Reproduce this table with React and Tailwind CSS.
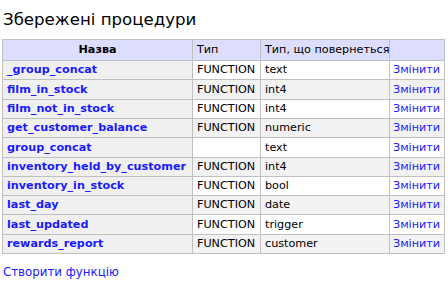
import React from "react";

const rows = [
  ["_group_concat", "FUNCTION", "text"],
  ["film_in_stock", "FUNCTION", "int4"],
  ["film_not_in_stock", "FUNCTION", "int4"],
  ["get_customer_balance", "FUNCTION", "numeric"],
  ["group_concat", "", "text"],
  ["inventory_held_by_customer", "FUNCTION", "int4"],
  ["inventory_in_stock", "FUNCTION", "bool"],
  ["last_day", "FUNCTION", "date"],
  ["last_updated", "FUNCTION", "trigger"],
  ["rewards_report", "FUNCTION", "customer"],
];

export default function App() {
  return (
    <div
      className="w-[448px] h-[284px] bg-white text-black text-[11.2px] overflow-hidden"
      style={{ fontFamily: '"DejaVu Sans", Verdana, sans-serif' }}
    >
      <div className="pt-[9px] pl-[3px] text-[16.6px] leading-[21px] font-normal">
        Збережені процедури
      </div>
      <table className="ml-[2px] mt-[9px] border-collapse border border-[#c0c0c0] table-fixed w-[442px]">
        <colgroup>
          <col className="w-[190px]" />
          <col className="w-[68px]" />
          <col className="w-[129px]" />
          <col className="w-[55px]" />
        </colgroup>
        <thead>
          <tr className="bg-[#ddddff]">
            <th className="border border-[#c0c0c0] px-[3.4px] py-[3.3px] leading-[13.5px] text-center font-bold">
              Назва
            </th>
            <td className="border border-[#c0c0c0] px-[4px] py-[3.3px] leading-[13.5px]">Тип</td>
            <td className="border border-[#c0c0c0] px-[4px] py-[3.3px] leading-[13.5px] whitespace-nowrap">
              Тип, що повернеться
            </td>
            <td className="border border-[#c0c0c0] px-[4px] py-[3.3px] leading-[13.5px]"></td>
          </tr>
        </thead>
        <tbody>
          {rows.map((r, i) => {
            const bg = i % 2 === 1 ? "bg-[#f2f2f2]" : "bg-white";
            return (
              <tr key={r[0]}>
                <th className="border border-[#c0c0c0] bg-[#f0f0f0] px-[4px] py-[2.4px] leading-[13.5px] text-left font-bold whitespace-nowrap">
                  <a className="text-[#1a1aff]">{r[0]}</a>
                </th>
                <td className={`border border-[#c0c0c0] ${bg} px-[4px] py-[2.4px] leading-[13.5px] whitespace-nowrap`}>
                  {r[1]}
                </td>
                <td className={`border border-[#c0c0c0] ${bg} px-[4px] py-[2.4px] leading-[13.5px] whitespace-nowrap`}>
                  {r[2]}
                </td>
                <td className={`border border-[#c0c0c0] ${bg} px-[3px] py-[2.4px] leading-[13.5px] whitespace-nowrap`}>
                  <a className="text-[#1a1aff]">Змінити</a>
                </td>
              </tr>
            );
          })}
        </tbody>
      </table>
      <div className="mt-[11px] pl-[3px] leading-[14px] text-[11.8px]">
        <a className="text-[#1a1aff]">Створити функцію</a>
      </div>
    </div>
  );
}
